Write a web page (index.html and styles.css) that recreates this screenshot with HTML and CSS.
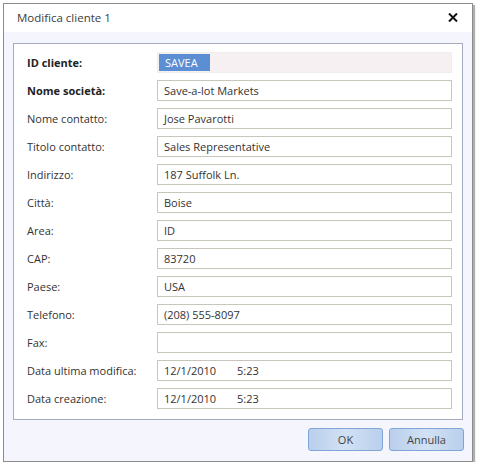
FILE: index.html
```html
<!DOCTYPE html>
<html>
<head>
<meta charset="utf-8">
<link rel="stylesheet" href="styles.css">
</head>
<body>
<div class="dialog">
  <div class="titlebar">
    <span class="title">Modifica cliente 1</span>
    <svg class="close" width="10" height="9" viewBox="0 0 10 9"><path d="M1 0.5 L9 8.5 M9 0.5 L1 8.5" stroke="#111" stroke-width="2"/></svg>
  </div>
  <div class="body">
    <div class="panel">
      <div class="row"><span class="label bold">ID cliente:</span><span class="field readonly"><span class="sel">SAVEA</span></span></div>
      <div class="row"><span class="label bold">Nome società:</span><span class="field">Save-a-lot Markets</span></div>
      <div class="row"><span class="label">Nome contatto:</span><span class="field">Jose Pavarotti</span></div>
      <div class="row"><span class="label">Titolo contatto:</span><span class="field">Sales Representative</span></div>
      <div class="row"><span class="label">Indirizzo:</span><span class="field">187 Suffolk Ln.</span></div>
      <div class="row"><span class="label">Città:</span><span class="field">Boise</span></div>
      <div class="row"><span class="label">Area:</span><span class="field">ID</span></div>
      <div class="row"><span class="label">CAP:</span><span class="field">83720</span></div>
      <div class="row"><span class="label">Paese:</span><span class="field">USA</span></div>
      <div class="row"><span class="label">Telefono:</span><span class="field">(208) 555-8097</span></div>
      <div class="row"><span class="label">Fax:</span><span class="field"></span></div>
      <div class="row"><span class="label">Data ultima modifica:</span><span class="field"><span class="date">12/1/2010</span><span>5:23</span></span></div>
      <div class="row"><span class="label">Data creazione:</span><span class="field"><span class="date">12/1/2010</span><span>5:23</span></span></div>
    </div>
    <div class="buttons">
      <button class="btn">OK</button>
      <button class="btn">Annulla</button>
    </div>
  </div>
</div>
</body>
</html>
```
FILE: styles.css
```css
html, body {
  margin: 0;
  padding: 0;
  background: #ffffff;
}
body {
  font-family: "Open Sans", "Noto Sans", sans-serif;
  font-size: 11px;
  color: #333;
}
.dialog {
  margin: 3px 0 0 3px;
  width: 468px;
  height: 457px;
  border: 1px solid #8c8c8c;
  box-shadow: 2px 2px 1px #b0b0b0;
  display: flex;
  flex-direction: column;
  background: #f5f6fd;
}
.titlebar {
  height: 28px;
  background: #ffffff;
  display: flex;
  align-items: center;
  justify-content: space-between;
  padding: 0 14px 0 13px;
}
.title {
  color: #3c3c3c;
  font-size: 11.5px;
  margin-top: -2px;
}
.close {
  margin-top: -2px;
}
.body {
  flex: 1;
  padding: 11px 9px 0 9px;
  display: flex;
  flex-direction: column;
}
.panel {
  background: #ffffff;
  border: 1px solid #a4abbc;
  padding: 8px 10px 10px 13px;
  display: flex;
  flex-direction: column;
  gap: 7px;
}
.row {
  display: flex;
  align-items: center;
  height: 21px;
}
.label {
  width: 130px;
  flex: none;
  color: #333;
}
.bold {
  font-weight: bold;
  color: #222;
}
.field {
  flex: 1;
  height: 19px;
  border: 1px solid #c6c6bc;
  display: flex;
  align-items: center;
  padding-left: 6px;
  color: #333;
  white-space: nowrap;
}
.field.readonly {
  border-color: #f0ecef;
  background: #f6f0f3;
  padding-left: 1px;
}
.sel {
  background: #5b8ed2;
  color: #fff;
  height: 17px;
  width: 45px;
  padding-left: 6px;
  display: flex;
  align-items: center;
}
.date {
  width: 73px;
}
.buttons {
  display: flex;
  justify-content: flex-end;
  gap: 6px;
  padding: 8px 0 0 0;
  margin-right: -1px;
}
.btn {
  width: 75px;
  height: 23px;
  font-family: "Open Sans", "Noto Sans", sans-serif;
  font-size: 11px;
  color: #444;
  border: 1px solid #80a5d8;
  border-radius: 3px;
  background: linear-gradient(to right, #b9cfec, #d2e1f4 50%, #b9cfec);
  padding: 0;
}
```
